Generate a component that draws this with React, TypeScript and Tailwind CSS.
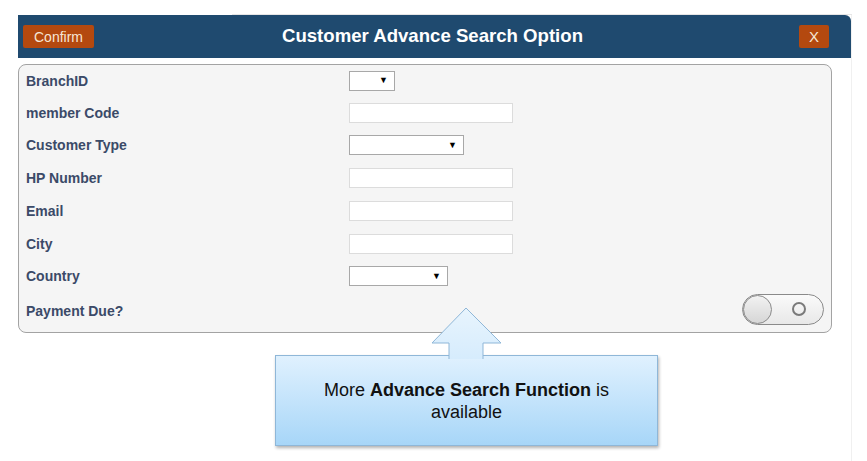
import React from "react";

const labelCls =
  "text-[14px] font-bold text-[#3b4a68] leading-none";

function Row({ label, h, children }: { label: string; h: string; children?: React.ReactNode }) {
  return (
    <div className={`flex items-center ${h}`}>
      <div className={`w-[330px] pl-[7px] ${labelCls}`}>{label}</div>
      <div className="flex-1 flex items-center">{children}</div>
    </div>
  );
}

function SelectBox({ w }: { w: string }) {
  return (
    <div
      className={`${w} h-[20px] bg-white border border-[#a8a8a8] flex items-center justify-end pr-[6px] text-[9px] text-black leading-none`}
    >
      ▼
    </div>
  );
}

function TextBox() {
  return <div className="w-[164px] h-[20px] bg-white border border-[#dcdcdc]" />;
}

export default function App() {
  return (
    <div
      className="relative w-[867px] h-[461px] bg-white overflow-hidden"
      style={{ fontFamily: '"Liberation Sans", Arial, sans-serif' }}
    >
      <div className="absolute left-[232px] top-[14px] w-[620px] h-px bg-[#e6e6e6]" />
      <div className="pt-[15px] pl-[18px]">
        <div className="w-[834px] border-r border-[#f0f0f0] pb-[53px]">
          {/* Header */}
          <div className="h-[43px] bg-[#1f4a6f] rounded-tr-[6px] flex items-center pl-[5px] pr-[22px]">
            <div className="w-[71px] h-[23px] bg-[#b4490f] rounded-[2px] flex items-center justify-center text-[14px] text-[#f6e6d6] leading-none">
              Confirm
            </div>
            <div className="flex-1 text-center text-[18.6px] font-bold text-white leading-none pr-[28px]">
              Customer Advance Search Option
            </div>
            <div className="w-[30px] h-[23px] bg-[#b4490f] rounded-[2px] flex items-center justify-center text-[15px] text-[#f6e6d6] leading-none">
              X
            </div>
          </div>
          {/* Panel */}
          <div className="mt-[6px] w-[814px] h-[269px] rounded-[8px] border border-[#a3a3a3] bg-[#f5f5f5] flex flex-col">
            <Row label="BranchID" h="h-[31px]">
              <SelectBox w="w-[46px]" />
            </Row>
            <Row label="member Code" h="h-[33px]">
              <TextBox />
            </Row>
            <Row label="Customer Type" h="h-[32px]">
              <SelectBox w="w-[115px]" />
            </Row>
            <Row label="HP Number" h="h-[33px]">
              <TextBox />
            </Row>
            <Row label="Email" h="h-[33px]">
              <TextBox />
            </Row>
            <Row label="City" h="h-[33px]">
              <TextBox />
            </Row>
            <Row label="Country" h="h-[32px]">
              <SelectBox w="w-[99px]" />
            </Row>
            <div className="flex items-center h-[34px] pr-[7px]">
              <div className={`flex-1 pl-[7px] pt-[4px] ${labelCls}`}>Payment Due?</div>
              <div className="relative w-[82px] h-[31px] rounded-full border border-[#8a8a8a] bg-gradient-to-b from-[#fafafa] to-[#e8e8e8] flex items-center">
                <div className="w-[29px] h-[29px] rounded-full border border-[#8a8a8a] bg-gradient-to-b from-[#f2f2f2] to-[#d6d6d6]" />
                <div className="ml-[20px] w-[14px] h-[14px] rounded-full border-2 border-[#7a7a7a]" />
              </div>
            </div>
          </div>
          {/* Callout */}
          <div className="mt-[22px] ml-[257px] w-[383px] h-[91px] border border-[#8fb7d8] bg-gradient-to-b from-[#e0f1fe] to-[#a7d6f8] shadow-[1px_2px_3px_rgba(0,0,0,0.3)] flex flex-col items-center justify-center text-[18px] text-[#111] leading-[22px]">
            <div>
              More <span className="font-bold">Advance Search Function</span> is
            </div>
            <div>available</div>
          </div>
        </div>
      </div>
      {/* Arrow */}
      <svg
        className="absolute left-[430px] top-[306px]"
        width="74"
        height="53"
        viewBox="0 0 74 53"
      >
        <defs>
          <linearGradient id="ag" x1="0" y1="0" x2="0" y2="1">
            <stop offset="0" stopColor="#e8f4fd" />
            <stop offset="1" stopColor="#d6ecfd" />
          </linearGradient>
        </defs>
        <path
          d="M19 53 L19 37 L2 37 L36 2 L71 37 L53 37 L53 53"
          fill="url(#ag)"
          stroke="#8fb7d8"
          strokeWidth="1"
        />
      </svg>
    </div>
  );
}
